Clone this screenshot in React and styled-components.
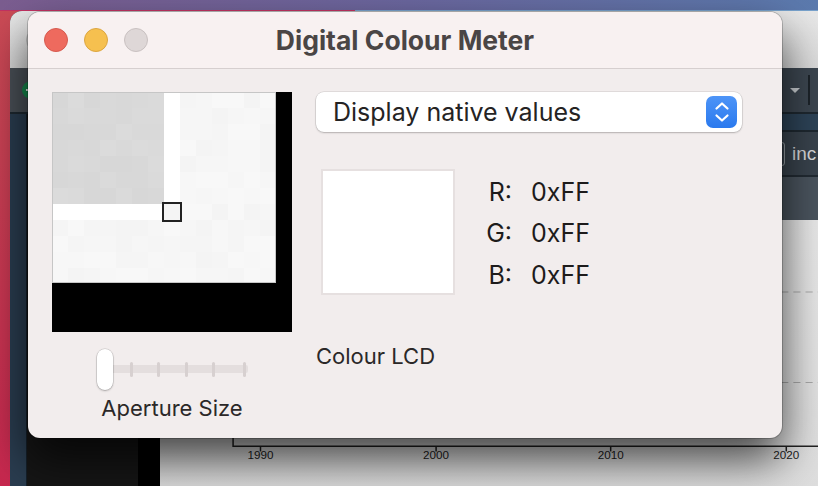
import React from "react";
import styled, { createGlobalStyle } from "styled-components";

const GlobalStyle = createGlobalStyle`
  html, body {
    margin: 0;
    padding: 0;
    background: #1a1a1a;
  }
  body {
    font-family: "Inter", "Noto Sans", "Liberation Sans", sans-serif;
    -webkit-font-smoothing: antialiased;
  }
`;

const Desktop = styled.div`
  position: relative;
  width: 818px;
  height: 486px;
  overflow: hidden;
  background:
    linear-gradient(90deg, #c23262 0 355px, #78a2cc 355px) 0 10px / 100% 1px no-repeat,
    linear-gradient(90deg, #7b5d90, #6b679f 50%, #5b7aae) 0 0 / 100% 10px no-repeat,
    linear-gradient(180deg, #cb4c56, #c8284f);
`;

/* ---------- window in the background ---------- */

const BackWindow = styled.div`
  position: absolute;
  left: 10px;
  top: 11px;
  right: 0;
  bottom: 0;
  border-top-left-radius: 12px;
  overflow: hidden;
  display: flex;
  flex-direction: column;
  background: #2a3d50;
`;

const BackTitleBar = styled.div`
  height: 57px;
  flex: none;
  background: linear-gradient(180deg, #e8e8e8, #dadada);
  display: flex;
  align-items: center;
  padding-left: 16px;
`;

const BackLight = styled.span`
  width: 22px;
  height: 22px;
  border-radius: 50%;
  background: #d4d4d4;
  border: 1px solid #b9b9b9;
`;

const BackToolbar = styled.div`
  height: 44px;
  flex: none;
  display: flex;
  align-items: center;
  background: #3c4650;
  border-bottom: 2px solid #1e2830;
`;

const ToolbarStart = styled.div`
  width: 150px;
  height: 100%;
  background: #4a5057;
  display: flex;
  align-items: center;
  padding-left: 12px;
  box-sizing: border-box;
`;

const AddButton = styled.span`
  width: 18px;
  height: 18px;
  border-radius: 50%;
  background: #178c4e;
  position: relative;
  &::after {
    content: "";
    position: absolute;
    left: 4px;
    top: 8px;
    width: 10px;
    height: 2px;
    background: #f2f2f2;
  }
`;

const ToolbarSpacer = styled.div`
  flex: 1;
`;

const DropCaret = styled.span`
  width: 0;
  height: 0;
  border-left: 5px solid transparent;
  border-right: 5px solid transparent;
  border-top: 5px solid #c9cdd1;
  margin-right: 8px;
`;

const ToolbarDivider = styled.span`
  width: 2px;
  height: 30px;
  background: #1c2329;
  margin-right: 8px;
`;

const BackBody = styled.div`
  flex: 1;
  display: flex;
  min-height: 0;
`;

const Rail = styled.div`
  width: 16px;
  flex: none;
  background: #2a3d50;
  border-right: 1px solid #15202a;
`;

const SidePanel = styled.div`
  width: ${({ width }) => width}px;
  flex: none;
  background: ${({ tone }) => tone};
`;

const MainColumn = styled.div`
  flex: 1;
  display: flex;
  flex-direction: column;
  min-width: 0;
`;

const Band = styled.div`
  height: ${({ h }) => h}px;
  flex: none;
  background: ${({ tone }) => tone};
  border-bottom: ${({ line }) => (line ? `2px solid ${line}` : "none")};
  display: flex;
  align-items: center;
  justify-content: flex-end;
`;

const FilterBox = styled.span`
  width: 24px;
  height: 22px;
  border: 1px solid #9aa1a8;
  border-radius: 3px;
  margin-right: 7px;
`;

const FilterText = styled.span`
  font-family: "Liberation Sans", sans-serif;
  font-size: 19px;
  color: #d8dadc;
  width: 26px;
  overflow: hidden;
  white-space: nowrap;
`;

const ChartArea = styled.div`
  flex: 1;
  background: linear-gradient(180deg, #e9e9e9, #dedede);
`;

/* ---------- Digital Colour Meter window ---------- */

const MeterWindow = styled.div`
  position: absolute;
  left: 28px;
  top: 12px;
  width: 754px;
  height: 426px;
  border-radius: 12px;
  background: #f2eded;
  box-shadow: 0 0 0 1px rgba(0, 0, 0, 0.2), 0 22px 45px rgba(0, 0, 0, 0.7);
  overflow: hidden;
  display: flex;
  flex-direction: column;
`;

const TitleBar = styled.div`
  height: 56px;
  flex: none;
  background: #f8f1f1;
  border-bottom: 1px solid #d6cfcf;
  display: grid;
  grid-template-columns: 1fr auto 1fr;
  align-items: center;
  padding: 0 16px;
`;

const Lights = styled.div`
  display: flex;
  gap: 16px;
`;

const Light = styled.span`
  width: 24px;
  height: 24px;
  box-sizing: border-box;
  border-radius: 50%;
  background: ${({ fill }) => fill};
  border: 1px solid ${({ rim }) => rim};
`;

const Title = styled.h1`
  margin: 0;
  font-size: 26.5px;
  font-weight: 700;
  color: #4a4545;
`;

const Body = styled.div`
  flex: 1;
  display: flex;
  padding: 23px 0 0 24px;
`;

const LeftColumn = styled.div`
  width: 240px;
  display: flex;
  flex-direction: column;
  align-items: center;
`;

const Slider = styled.div`
  margin-top: 17px;
  width: 151px;
  height: 41px;
  position: relative;
  display: flex;
  align-items: center;
`;

const Track = styled.div`
  position: absolute;
  left: 8px;
  right: 0;
  top: 16px;
  height: 8px;
  background: #e4dede;
  border-radius: 2px;
`;

const Tick = styled.span`
  position: absolute;
  top: -3.5px;
  width: 3px;
  height: 15px;
  border-radius: 1.5px;
  background: #d7d0d0;
`;

const Knob = styled.span`
  position: relative;
  width: 16px;
  height: 41px;
  border-radius: 8px;
  background: #ffffff;
  box-shadow: 0 0 0 0.5px rgba(0, 0, 0, 0.18), 0 1px 2px rgba(0, 0, 0, 0.25);
`;

const Caption = styled.div`
  font-size: 22px;
  line-height: 26px;
  color: #2b2828;
  margin-top: ${({ top }) => top}px;
`;

const RightColumn = styled.div`
  width: 426px;
  margin-left: 24px;
  display: flex;
  flex-direction: column;
`;

const Popup = styled.div`
  height: 40px;
  border-radius: 8px;
  background: #ffffff;
  box-shadow: 0 0 0 0.5px rgba(0, 0, 0, 0.14), 0 1px 2px rgba(0, 0, 0, 0.2);
  display: flex;
  align-items: center;
  justify-content: space-between;
  padding: 0 5px 0 17px;
`;

const PopupLabel = styled.span`
  font-size: 25px;
  color: #252323;
`;

const Stepper = styled.span`
  width: 31px;
  height: 32px;
  border-radius: 7px;
  background: linear-gradient(180deg, #4d94f7, #2a79ee);
  display: flex;
  align-items: center;
  justify-content: center;
`;

const SampleRow = styled.div`
  margin-top: 37px;
  padding-left: 5px;
  display: flex;
`;

const Swatch = styled.div`
  width: 134px;
  height: 126px;
  box-sizing: border-box;
  border: 2px solid #e6e0e0;
  background: ${({ colour }) => colour};
`;

const Readout = styled.div`
  margin-left: 17px;
  padding-top: 2px;
  display: grid;
  grid-template-columns: 40px auto;
  column-gap: 19px;
  grid-auto-rows: 41.5px;
  align-items: center;
  font-size: 25px;
  color: #1d1b1b;
`;

const Channel = styled.span`
  text-align: right;
`;

/* ---------- drawings ---------- */

const shade = (c, r, base, spread) => {
  const h = Math.sin(c * 12.9898 + r * 78.233) * 43758.5453;
  const f = h - Math.floor(h);
  return Math.round(base + (f - 0.5) * spread);
};

function Magnifier() {
  const cells = [];
  for (let r = 0; r < 12; r++) {
    for (let c = 0; c < 14; c++) {
      let v;
      if (c < 7 && r < 7) v = shade(c, r, 217, 4);
      else if ((c === 7 && r < 7) || (r === 7 && c < 7)) v = 255;
      else v = shade(c, r, 246, 5);
      cells.push(
        <rect
          key={`${c}-${r}`}
          x={c * 16}
          y={r * 16}
          width={16}
          height={16}
          fill={`rgb(${v},${v},${v})`}
        />
      );
    }
  }
  return (
    <svg width="240" height="240" viewBox="0 0 240 240">
      <rect width="240" height="240" fill="#000" />
      <svg x="0" y="0" width="224" height="191">
        {cells}
      </svg>
      <rect x="0.5" y="0.5" width="223" height="190" fill="none" stroke="#c6c6c6" />
      <rect x="111" y="111" width="18" height="18" fill="none" stroke="#222" strokeWidth="2" />
    </svg>
  );
}

function StepperArrows() {
  return (
    <svg width="16" height="22" viewBox="0 0 16 22" fill="none" stroke="#fff" strokeWidth="2.2" strokeLinecap="round" strokeLinejoin="round">
      <path d="M2.5 7.5 L8 2.5 L13.5 7.5" />
      <path d="M2.5 14.5 L8 19.5 L13.5 14.5" />
    </svg>
  );
}

function Chart() {
  const ticks = [
    { x: 99, label: "1990" },
    { x: 272, label: "2000" },
    { x: 444, label: "2010" },
    { x: 617, label: "2020" },
  ];
  return (
    <svg width="100%" height="100%" viewBox="0 0 658 266" preserveAspectRatio="xMinYMin slice">
      <line x1="72" y1="71" x2="658" y2="71" stroke="#a9a9a9" strokeDasharray="7 5" />
      <line x1="72" y1="160" x2="658" y2="160" stroke="#a9a9a9" strokeDasharray="7 5" />
      <path d="M72 0 V223 H658" fill="none" stroke="#222" strokeWidth="1.5" />
      {ticks.map((t) => (
        <g key={t.label}>
          <line x1={t.x} y1="223" x2={t.x} y2="228" stroke="#222" strokeWidth="1.5" />
          <text x={t.x} y="235" textAnchor="middle" fontSize="11.5" fontFamily="Liberation Sans, sans-serif" fill="#222">
            {t.label}
          </text>
        </g>
      ))}
    </svg>
  );
}

const tickPositions = [35, 62, 90, 117, 148];

export default function App() {
  return (
    <>
      <GlobalStyle />
      <Desktop>
        <BackWindow>
          <BackTitleBar>
            <BackLight />
          </BackTitleBar>
          <BackToolbar>
            <ToolbarStart>
              <AddButton />
            </ToolbarStart>
            <ToolbarSpacer />
            <DropCaret />
            <ToolbarDivider />
          </BackToolbar>
          <BackBody>
            <Rail />
            <SidePanel width={111} tone="#161616" />
            <SidePanel width={22} tone="#000000" />
            <MainColumn>
              <Band h={16} tone="#2d4357" line="#1e2830" />
              <Band h={43} tone="#39434d" line="#222b33">
                <FilterBox />
                <FilterText>inc</FilterText>
              </Band>
              <Band h={43} tone="#4a545e" />
              <ChartArea>
                <Chart />
              </ChartArea>
            </MainColumn>
          </BackBody>
        </BackWindow>

        <MeterWindow>
          <TitleBar>
            <Lights>
              <Light fill="#ee6a5e" rim="#d65a4f" />
              <Light fill="#f6c04f" rim="#dca641" />
              <Light fill="#ded7d7" rim="#c9c1c1" />
            </Lights>
            <Title>Digital Colour Meter</Title>
            <span />
          </TitleBar>
          <Body>
            <LeftColumn>
              <Magnifier />
              <Slider>
                <Track>
                  {tickPositions.map((x) => (
                    <Tick key={x} style={{ left: x - 8 - 1.5 + "px" }} />
                  ))}
                </Track>
                <Knob />
              </Slider>
              <Caption top={5}>Aperture Size</Caption>
            </LeftColumn>
            <RightColumn>
              <Popup>
                <PopupLabel>Display native values</PopupLabel>
                <Stepper>
                  <StepperArrows />
                </Stepper>
              </Popup>
              <SampleRow>
                <Swatch colour="#ffffff" />
                <Readout>
                  <Channel>R:</Channel>
                  <span>0xFF</span>
                  <Channel>G:</Channel>
                  <span>0xFF</span>
                  <Channel>B:</Channel>
                  <span>0xFF</span>
                </Readout>
              </SampleRow>
              <Caption top={47}>Colour LCD</Caption>
            </RightColumn>
          </Body>
        </MeterWindow>
      </Desktop>
    </>
  );
}
